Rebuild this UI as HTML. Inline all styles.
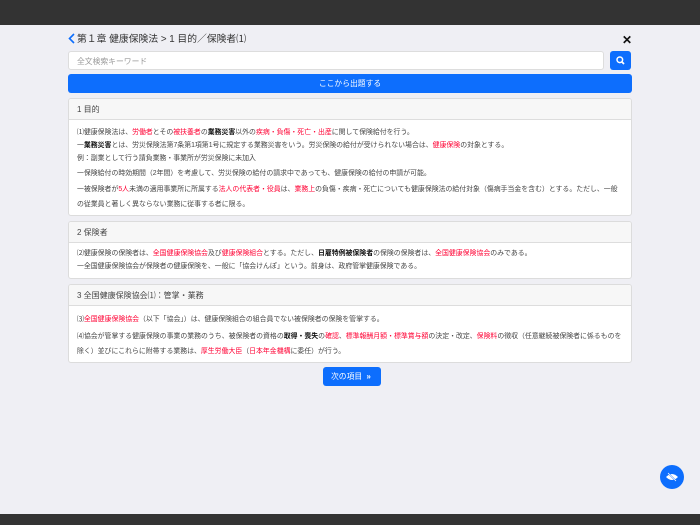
<!DOCTYPE html>
<html><head><meta charset="utf-8"><style>
*{box-sizing:border-box;margin:0;padding:0}
body{width:700px;height:525px;background:#efeff4;font-family:"Liberation Sans","Noto Sans CJK JP",sans-serif;color:#333;position:relative;overflow:hidden}
.top{position:absolute;left:0;top:0;width:700px;height:25px;background:#333}
.bot{position:absolute;left:0;top:514px;width:700px;height:11px;background:#333}
.title{position:absolute;left:68px;top:33px;font-size:9.8px;color:#333;line-height:13px}
.title svg{vertical-align:-2px;margin-right:2px}
.x{position:absolute;left:622px;top:33px;font-size:12px;font-weight:bold;color:#111}
.search{position:absolute;left:68px;top:51px;width:536px;height:19px;background:#fff;border:1px solid #ddd;border-radius:3px;font-size:7.8px;color:#999;padding:4px 8px}
.sbtn{position:absolute;left:610px;top:51px;width:21px;height:19px;background:#0d6efd;border-radius:3px}
.go{position:absolute;left:68px;top:74px;width:564px;height:19px;background:#0d6efd;border-radius:3px;color:#fff;font-size:7.8px;text-align:center;line-height:19px}
.card{position:absolute;left:68px;width:564px;background:#fff;border:1px solid #dcdcdc;border-radius:3px;overflow:hidden}
.card .h{background:#f7f7f7;border-bottom:1px solid #ddd;height:21px;line-height:21px;padding-left:8px;font-size:8px;color:#444}
.card .b{padding:4px 8px 0 8px;font-size:6.9px;color:#444;white-space:nowrap}
.b p{height:13px;line-height:13px}
.r{color:#f03}
.k{color:#111;font-weight:bold}
.next{position:absolute;left:323px;top:367px;width:58px;height:19px;background:#0d6efd;border-radius:3px;color:#fff;font-size:7.8px;line-height:19px;padding-left:8px}
.fab{position:absolute;left:660px;top:465px;width:24px;height:24px;border-radius:50%;background:#0d6efd}
</style></head><body>
<div class="top"></div>
<div class="title"><svg width="7" height="11" viewBox="0 0 7 11"><path d="M6 1L1.5 5.5L6 10" stroke="#0d6efd" stroke-width="1.6" fill="none"/></svg>第１章 健康保険法 &gt; 1 目的／保険者⑴</div>
<div class="x">✕</div>
<div class="search">全文検索キーワード</div>
<div class="sbtn"><svg width="21" height="19" viewBox="0 0 21 19"><circle cx="9.8" cy="8.8" r="2.8" stroke="#fff" stroke-width="1.5" fill="none"/><path d="M11.8 10.8L14 13" stroke="#fff" stroke-width="1.8"/></svg></div>
<div class="go">ここから出題する</div>

<div class="card" style="top:98px;height:118px">
<div class="h">1 目的</div>
<div class="b" style="padding-top:6px">
<p>⑴健康保険法は、<span class="r">労働者</span>とその<span class="r">被扶養者</span>の<span class="k">業務災害</span>以外の<span class="r">疾病・負傷・死亡・出産</span>に関して保険給付を行う。</p>
<p>一<span class="k">業務災害</span>とは、労災保険法第7条第1項第1号に規定する業務災害をいう。労災保険の給付が受けられない場合は、<span class="r">健康保険</span>の対象とする。</p>
<p>例：副業として行う請負業務・事業所が労災保険に未加入</p>
<p style="margin-top:2px">一保険給付の時効期間（2年間）を考慮して、労災保険の給付の請求中であっても、健康保険の給付の申請が可能。</p>
<p style="margin-top:3px">一被保険者が<span class="r">5人</span>未満の適用事業所に所属する<span class="r">法人の代表者・役員</span>は、<span class="r">業務上</span>の負傷・疾病・死亡についても健康保険法の給付対象（傷病手当金を含む）とする。ただし、一般</p>
<p style="margin-top:2px">の従業員と著しく異ならない業務に従事する者に限る。</p>
</div></div>

<div class="card" style="top:221px;height:58px">
<div class="h">2 保険者</div>
<div class="b" style="padding-top:4px">
<p>⑵健康保険の保険者は、<span class="r">全国健康保険協会</span>及び<span class="r">健康保険組合</span>とする。ただし、<span class="k">日雇特例被保険者</span>の保険の保険者は、<span class="r">全国健康保険協会</span>のみである。</p>
<p>一全国健康保険協会が保険者の健康保険を、一般に「協会けんぽ」という。前身は、政府管掌健康保険である。</p>
</div></div>

<div class="card" style="top:284px;height:79px">
<div class="h">3 全国健康保険協会⑴：管掌・業務</div>
<div class="b" style="padding-top:7px">
<p>⑶<span class="r">全国健康保険協会</span>（以下「協会」）は、健康保険組合の組合員でない被保険者の保険を管掌する。</p>
<p style="margin-top:4px">⑷協会が管掌する健康保険の事業の業務のうち、被保険者の資格の<span class="k">取得・喪失</span>の<span class="r">確認</span>、<span class="r">標準報酬月額・標準賞与額</span>の決定・改定、<span class="r">保険料</span>の徴収（任意継続被保険者に係るものを</p>
<p style="margin-top:2px">除く）並びにこれらに附帯する業務は、<span class="r">厚生労働大臣</span>（<span class="r">日本年金機構</span>に委任）が行う。</p>
</div></div>

<div class="next">次の項目 &nbsp;<b>»</b></div>
<div class="fab"><svg width="24" height="24" viewBox="0 0 24 24"><path d="M6 12Q12 6 18 12Q12 18 6 12Z" fill="#fff"/><path d="M7 7L17 17" stroke="#0d6efd" stroke-width="1.5"/><path d="M8 8L16 16" stroke="#fff" stroke-width="0.8"/></svg></div>
<div class="bot"></div>
</body></html>
